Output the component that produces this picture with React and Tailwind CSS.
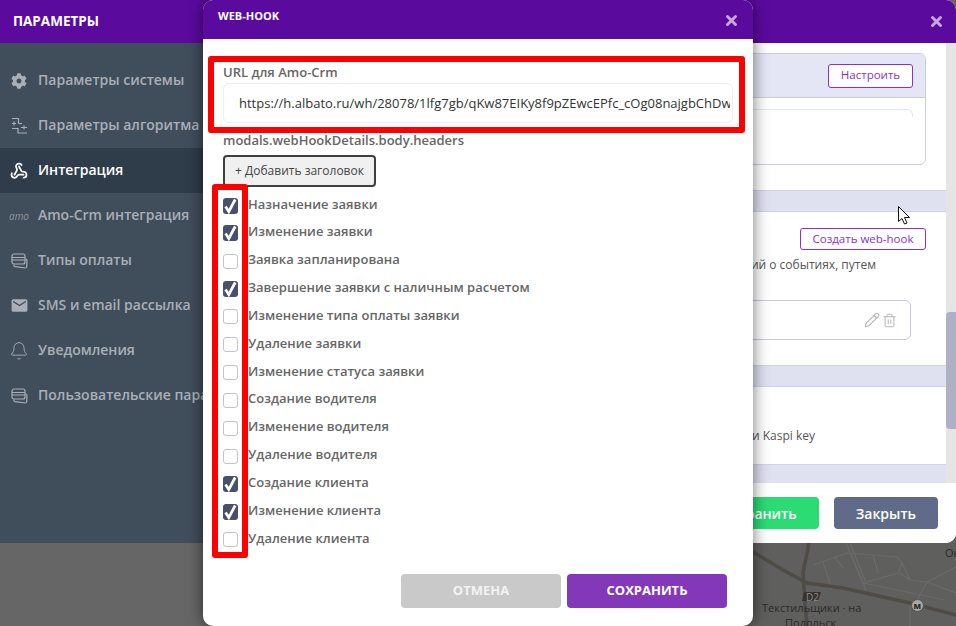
import React from "react";
import { Pencil, Trash2, Webhook, Bell } from "lucide-react";
import { FaCog } from "react-icons/fa";
import { MdEmail } from "react-icons/md";

const font = { fontFamily: '"Open Sans", sans-serif' };

function Close() {
  return (
    <svg width="13" height="13" viewBox="0 0 13 13" className="block">
      <path d="M2.5 2.5L10.5 10.5M10.5 2.5L2.5 10.5" stroke="#c9a5e3" strokeWidth="3" strokeLinecap="round" />
    </svg>
  );
}

function Cards() {
  return (
    <svg width="17" height="16" viewBox="0 0 17 16" fill="none" stroke="currentColor" strokeWidth="1.2">
      <rect x="1" y="1" width="13" height="10" rx="2" />
      <path d="M1 4.5H14M1 7H14" />
      <path d="M3 11.5V12.5C3 13.2 3.5 13.6 4 13.7L14.5 15C15.3 15 15.6 14.5 15.7 14L16 7.5C16 6.5 15.5 6 14.5 6" />
    </svg>
  );
}

function Sliders() {
  return (
    <svg width="17" height="17" viewBox="0 0 17 17" fill="none" stroke="currentColor" strokeWidth="1.2">
      <path d="M1 1.5H7.5V6.5M1 6.5H5M3 4.5V8.5M1 6.5H5" />
      <path d="M7.5 6.5H11" />
      <path d="M1 11.5H7V16H16" />
      <path d="M10 10.5H16M13 8.5V12.5" />
    </svg>
  );
}

const side = [
  { t: "Параметры системы", i: <FaCog size={16} /> },
  { t: "Параметры алгоритма", i: <Sliders /> },
  { t: "Интеграция", i: <Webhook size={18} strokeWidth={2.3} />, active: true },
  { t: "Amo-Crm интеграция", i: <span className="text-[10px] font-normal italic leading-none text-[#8f96a0]">amo</span> },
  { t: "Типы оплаты", i: <Cards /> },
  { t: "SMS и email рассылка", i: <MdEmail size={19} /> },
  { t: "Уведомления", i: <Bell size={20} strokeWidth={1.1} /> },
  { t: "Пользовательские параметры", i: <Cards /> },
];

const checks = [
  ["Назначение заявки", true],
  ["Изменение заявки", true],
  ["Заявка запланирована", false],
  ["Завершение заявки с наличным расчетом", true],
  ["Изменение типа оплаты заявки", false],
  ["Удаление заявки", false],
  ["Изменение статуса заявки", false],
  ["Создание водителя", false],
  ["Изменение водителя", false],
  ["Удаление водителя", false],
  ["Создание клиента", true],
  ["Изменение клиента", true],
  ["Удаление клиента", false],
];

function Check({ on }) {
  return on ? (
    <span className="flex h-[16px] w-[15px] shrink-0 items-center justify-center rounded-[3px] bg-[#48506b]">
      <svg width="15" height="16" viewBox="0 0 15 16" className="overflow-visible">
        <path d="M2.5 8.5L5.8 13.5L12.2 1.5" fill="none" stroke="#fff" strokeWidth="2.7" />
      </svg>
    </span>
  ) : (
    <span className="h-[15px] w-[15px] shrink-0 rounded-[3px] border border-[#c3c3d0] bg-white" />
  );
}

function Strip({ className }) {
  return <div className={"w-full shrink-0 border-y border-[#d0d1e6] bg-[#dfe0f0] " + className} />;
}

function MapBg() {
  return (
    <svg className="absolute left-0 top-0" width="956" height="626" viewBox="0 0 956 626">
      <rect x="700" y="530" width="256" height="96" fill="#5f5f5d" />
      <g fill="none" stroke="#6c6b69" strokeWidth="1.2">
        <path d="M813 565L847 553L897 557L902 563L898 573L863 583L850 553" />
        <path d="M846 543L863 583L866 590M850 543L866 583" />
        <path d="M823 562L832 590M835 557L843 568" />
        <path d="M873 555L878 573M902 563L910 580L927 582L956 567M910 580L900 573" />
        <path d="M927 582L917 600M927 582L956 593M910 603L910 626" />
        <path d="M863 583L945 600" />
      </g>
      <g fill="none" stroke="#4f4c46" strokeWidth="3.5">
        <path d="M753 552L783 570L807 583L843 588L910 603L956 615" />
        <path d="M809 543L803 573L805 603L807 626" />
      </g>
      <path d="M804 592H821L818 601H802Z" fill="#38332f" />
      <text x="806" y="600.5" fill="#8e8b85" fontSize="10" fontFamily="Open Sans, sans-serif">D2</text>
      <circle cx="917.5" cy="605.5" r="6" fill="#a8a6a2" stroke="#55534f" />
      <text x="913.5" y="609" fill="#252422" fontSize="9" fontWeight="700" fontFamily="Open Sans, sans-serif">м</text>
      <text x="762" y="612" fill="#2b2a28" fontSize="11" fontFamily="Open Sans, sans-serif">Текстильщики · на</text>
      <text x="785" y="627" fill="#2b2a28" fontSize="11" fontFamily="Open Sans, sans-serif">Подольск</text>
      <text x="945" y="557" fill="#2b2a28" fontSize="11" fontFamily="Open Sans, sans-serif">Ок</text>
    </svg>
  );
}

export default function App() {
  return (
    <div className="relative h-[626px] w-[956px] overflow-hidden bg-[#666666]" style={font}>
      <MapBg />

      {/* base modal */}
      <div className="relative flex h-[543px] flex-col overflow-hidden rounded-r-[10px] bg-white">
        <div className="flex h-[43px] shrink-0 items-center justify-between bg-[#5b0a9e] pl-[13px] pr-[13px]">
          <span className="text-[13.5px] font-bold text-white">ПАРАМЕТРЫ</span>
          <Close />
        </div>
        <div className="flex min-h-0 flex-1">
          <div className="w-[240px] shrink-0 overflow-hidden bg-[#404d5b] pt-[15px]">
            {side.map((s) => (
              <div
                key={s.t}
                className={
                  "flex h-[45px] items-center whitespace-nowrap text-[14px] font-semibold " +
                  (s.active ? "bg-[#2f3c4a] text-white" : "text-[#a9afb7]")
                }
              >
                <span className="flex w-[38px] shrink-0 items-center justify-center">{s.i}</span>
                <span className="-mt-[2px]">{s.t}</span>
              </div>
            ))}
          </div>

          <div className="flex min-w-0 flex-1 flex-col">
            <div className="flex min-h-0 flex-1">
              <div className="flex min-w-0 flex-1 flex-col overflow-hidden pt-[10px] text-[12px] text-[#555]">
                <div className="mr-[20px] h-[112px] shrink-0 overflow-hidden rounded-[6px] border border-[#cacce4]">
                  <div className="flex h-[44px] items-center justify-end border-b border-[#c9cbe4] bg-[#e4e6f5] pr-[12px]">
                    <button className="h-[24px] w-[85px] rounded-[3px] border border-[#8a30d0] bg-white pb-[1px] text-[11.5px] font-medium text-[#8a30d0]">
                      Настроить
                    </button>
                  </div>
                  <div className="mr-[12px] mt-[11px] h-[8px] rounded-tr-[6px] border-r border-t border-[#e4e6f5]" />
                </div>
                <Strip className="mt-[25px] h-[22px]" />
                <div className="mr-[20px] mt-[16px] flex shrink-0 justify-end">
                  <button className="h-[22px] w-[126px] rounded-[3px] border border-[#8a30d0] bg-white pb-[1px] text-[11.5px] font-medium text-[#8a30d0]">
                    Создать web-hook
                  </button>
                </div>
                <div className="mr-[70px] mt-[6px] h-[18px] shrink-0 whitespace-nowrap text-right leading-[18px]">
                  ий о событиях, путем
                </div>
                <div className="mr-[35px] mt-[26px] flex h-[40px] shrink-0 items-center justify-end gap-[2px] rounded-[6px] border border-[#c5c9e2] pr-[13px] text-[#b5b5b5]">
                  <Pencil size={16} strokeWidth={1.6} />
                  <Trash2 size={15} strokeWidth={1.6} />
                </div>
                <Strip className="mt-[25px] h-[22px]" />
                <div className="mr-[131px] mt-[40px] h-[18px] shrink-0 whitespace-nowrap text-right leading-[18px]">
                  и Kaspi key
                </div>
                <Strip className="mt-[19px] h-[30px]" />
              </div>
              <div className="w-[10px] shrink-0 bg-[#e5e5e5] pt-[269px]">
                <div className="h-[117px] rounded-l-[4px] bg-[#aeb1c3]" />
              </div>
            </div>
            <div className="flex h-[60px] shrink-0 items-center justify-end gap-[15px] bg-white pr-[18px] text-[14px] font-semibold text-white">
              <button className="h-[32px] rounded-[4px] bg-[#2bdc74] px-[22px]">Сохранить</button>
              <button className="h-[32px] rounded-[4px] bg-[#5f6b88] px-[22px]">Закрыть</button>
            </div>
          </div>
        </div>
      </div>

      {/* web-hook modal */}
      <div className="absolute bottom-0 left-[203px] top-0 flex w-[550px] flex-col rounded-[10px] bg-white shadow-[0_0_16px_rgba(0,0,0,0.55)]">
        <div className="flex h-[39px] shrink-0 items-center justify-between rounded-t-[10px] bg-[#5b0a9e] pb-[6px] pl-[15px] pr-[15px]">
          <span className="text-[11px] font-bold text-white">WEB-HOOK</span>
          <span className="mt-[7px]"><Close /></span>
        </div>
        <div className="flex flex-1 flex-col px-[20px] pt-[25px] text-[13px] font-semibold text-[#666]">
          <div className="-mt-[1px] h-[20px] leading-[18px]">URL для Amo-Crm</div>
          <div className="h-[40px] overflow-hidden whitespace-nowrap rounded-[6px] border border-[#eeeeee] pl-[15px] pr-[2px] text-[13px] font-normal leading-[38px] text-[#333]">
            <div className="overflow-hidden">https://h.albato.ru/wh/28078/1lfg7gb/qKw87EIKy8f9pZEwcEPfc_cOg08najgbChDw</div>
          </div>
          <div className="mt-[8px] h-[18px] leading-[18px]">modals.webHookDetails.body.headers</div>
          <button className="mt-[6px] h-[32px] w-[153px] rounded-[4px] border-2 border-[#3f3f3f] bg-[#f0f0f0] text-[12px] font-normal text-[#444]">
            + Добавить заголовок
          </button>
          <div className="mt-[4.6px] flex flex-col">
            {checks.map(([t, on]) => (
              <label key={t} className="flex h-[27.85px] items-center gap-[10px] whitespace-nowrap leading-none">
                <Check on={on} />
                <span className="-mt-[3px]">{t}</span>
              </label>
            ))}
          </div>
          <div className="mt-[20.4px] flex justify-end gap-[6px] pr-[6px]">
            <button className="h-[34px] w-[160px] rounded-[4px] bg-[#c9c9c9] text-[13px] font-bold text-[#f3f3f3]">ОТМЕНА</button>
            <button className="h-[34px] w-[160px] rounded-[4px] bg-[#8338b9] text-[13px] font-bold text-white">СОХРАНИТЬ</button>
          </div>
        </div>
      </div>

      {/* red annotation frames */}
      <div className="pointer-events-none absolute left-[208px] top-[56px] h-[77px] w-[537px] rounded-[3px] border-[6px] border-[#ff0000]" />
      <div className="pointer-events-none absolute left-[212px] top-[184px] h-[374px] w-[36px] rounded-[3px] border-[6px] border-[#ff0000]" />

      {/* cursor */}
      <svg className="absolute left-[897px] top-[205px]" width="15" height="21" viewBox="0 0 15 21">
        <path d="M1.5 1.5V16.5L5 13.5L7.5 19L10 18L7.5 12.5H12.5Z" fill="#fff" stroke="#111" strokeWidth="1" />
      </svg>
    </div>
  );
}
